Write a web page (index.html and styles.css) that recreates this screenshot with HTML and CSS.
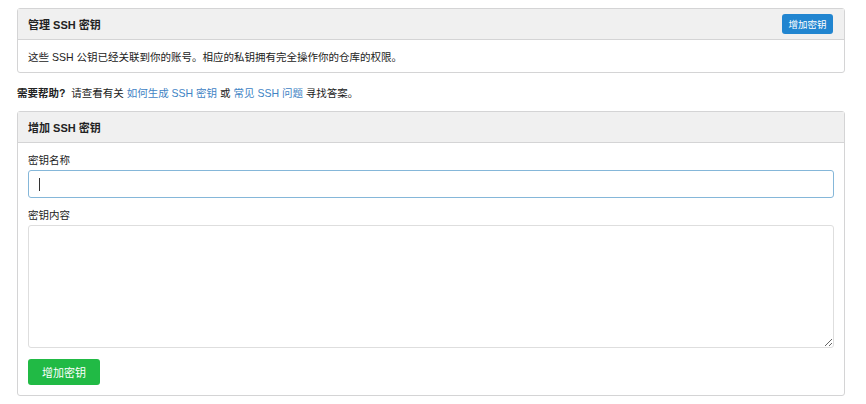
FILE: index.html
```html
<!DOCTYPE html>
<html lang="zh-CN">
<head>
<meta charset="utf-8">
<link rel="stylesheet" href="styles.css">
</head>
<body>
<div class="page">
  <section class="panel">
    <div class="panel-head">
      <span class="title">管理 SSH 密钥</span>
      <button class="btn btn-blue">增加密钥</button>
    </div>
    <div class="panel-body info">这些 SSH 公钥已经关联到你的账号。相应的私钥拥有完全操作你的仓库的权限。</div>
  </section>

  <p class="help"><strong>需要帮助?</strong>  请查看有关 <a href="#">如何生成 SSH 密钥</a> 或 <a href="#">常见 SSH 问题</a> 寻找答案。</p>

  <section class="panel">
    <div class="panel-head">
      <span class="title">增加 SSH 密钥</span>
    </div>
    <form class="panel-body form">
      <label class="field-label">密钥名称</label>
      <div class="input-wrap"><input class="input" type="text"><span class="caret"></span></div>
      <label class="field-label second">密钥内容</label>
      <textarea class="textarea"></textarea>
      <button type="button" class="btn btn-green">增加密钥</button>
    </form>
  </section>
</div>
</body>
</html>
```
FILE: styles.css
```css
* { box-sizing: border-box; }
html, body { margin: 0; padding: 0; background: #fff; }
body {
  font-family: "Liberation Sans", Arial, "Noto Sans CJK SC", sans-serif;
  font-size: 11px;
  color: #222;
}
.page {
  width: 828px;
  margin: 8px 0 0 17px;
}
.panel {
  border: 1px solid #d4d4d5;
  border-radius: 3px;
  background: #fff;
}
.panel-head {
  height: 31px;
  background: #f0f0f0;
  border-bottom: 1px solid #d4d4d5;
  display: flex;
  align-items: center;
  justify-content: space-between;
  padding: 0 11px 0 10px;
}
.title {
  font-weight: bold;
  font-size: 11px;
  color: #222;
}
.btn {
  border: none;
  border-radius: 3px;
  color: #fff;
  font-family: "Liberation Sans", Arial, "Noto Sans CJK SC", sans-serif;
  cursor: pointer;
  padding: 0;
}
.btn-blue {
  background: #2185d0;
  height: 20px;
  width: 51px;
  font-size: 9.5px;
}
.info {
  height: 32px;
  display: flex;
  align-items: center;
  padding: 0 10px;
  font-size: 10.5px;
}
.help {
  margin: 0;
  height: 38px;
  display: flex;
  align-items: center;
  white-space: pre;
  font-size: 10.5px;
}
.help strong { font-weight: bold; }
.help a { color: #4183c4; text-decoration: none; }
.form {
  display: flex;
  flex-direction: column;
  align-items: flex-start;
  padding: 9px 10px 10px 10px;
  margin: 0;
}
.field-label {
  display: block;
  line-height: 16px;
  height: 16px;
  margin-bottom: 2px;
  color: #222;
  font-size: 10.5px;
}
.field-label.second { margin-top: 9px; }
.input-wrap {
  position: relative;
  width: 806px;
  height: 28px;
}
.input {
  width: 100%;
  height: 28px;
  border: 1px solid #85b7d9;
  border-radius: 3px;
  outline: none;
  padding: 0 10px;
  font-size: 11px;
  background: #fff;
}
.caret {
  position: absolute;
  left: 11px;
  top: 8px;
  width: 1px;
  height: 13px;
  background: #333;
}
.textarea {
  width: 806px;
  height: 123px;
  border: 1px solid #dedede;
  border-radius: 3px;
  outline: none;
  resize: vertical;
  background: #fff;
  font-size: 11px;
}
.btn-green {
  margin-top: 11px;
  background: #21ba45;
  width: 72px;
  height: 26px;
  font-size: 11px;
}
```
